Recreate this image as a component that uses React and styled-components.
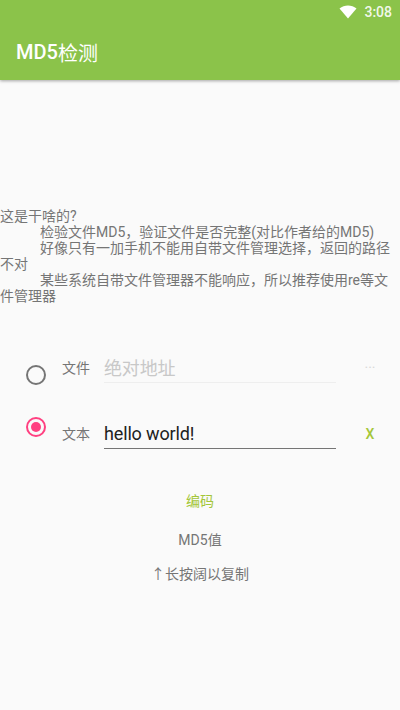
import React from "react";
import styled, { createGlobalStyle } from "styled-components";

const GlobalStyle = createGlobalStyle`
  html, body {
    margin: 0;
    padding: 0;
    background: #fafafa;
  }
  body {
    font-family: Roboto, "Noto Sans CJK SC", sans-serif;
  }
`;

const Page = styled.div`
  width: 400px;
  height: 710px;
  overflow: hidden;
  background: #fafafa;
  display: flex;
  flex-direction: column;
`;

const Header = styled.header`
  background: #8bc34a;
  height: 80px;
  box-shadow: 0 1px 3px rgba(0, 0, 0, 0.35);
  color: #fff;
`;

const StatusBar = styled.div`
  height: 24px;
  display: flex;
  align-items: center;
  justify-content: flex-end;
  gap: 7px;
  padding-right: 8px;
  font-size: 14px;
  font-weight: 500;
  color: rgba(255, 255, 255, 0.9);
`;

const Title = styled.h1`
  margin: 0;
  height: 56px;
  padding-left: 16px;
  display: flex;
  align-items: center;
  font-size: 20px;
  font-weight: 500;
`;

const TitleCjk = styled.span`
  font-weight: 400;
`;

const Intro = styled.section`
  margin-top: 128px;
  font-size: 14px;
  line-height: 16px;
  color: #757575;
`;

const IntroLine = styled.p`
  margin: 0;
  text-indent: ${(p) => (p.$indent ? "40px" : "0")};
`;

const Form = styled.div`
  margin-top: 42px;
  display: flex;
`;

const RadioColumn = styled.div`
  flex: none;
  margin: 19px 0 0 26px;
  width: 36px;
  display: flex;
  flex-direction: column;
  gap: 32px;
`;

const Radio = styled.span`
  box-sizing: border-box;
  width: 20px;
  height: 20px;
  border-radius: 50%;
  border: 2px solid ${(p) => (p.$checked ? "#ff4081" : "#757575")};
  display: flex;
  align-items: center;
  justify-content: center;
  &::after {
    content: "";
    display: ${(p) => (p.$checked ? "block" : "none")};
    width: 10px;
    height: 10px;
    border-radius: 50%;
    background: #ff4081;
  }
`;

const Fields = styled.div`
  flex: none;
  display: flex;
  flex-direction: column;
  gap: 22px;
`;

const Field = styled.div`
  display: flex;
  align-items: center;
  height: 44px;
`;

const FieldLabel = styled.span`
  width: 42px;
  margin-bottom: 2px;
  font-size: 14px;
  color: #757575;
`;

const FieldValue = styled.div`
  box-sizing: border-box;
  width: 232px;
  height: 30px;
  padding-bottom: ${(p) => (p.$active ? "0" : "2px")};
  display: flex;
  align-items: center;
  font-size: 18px;
  letter-spacing: -0.15px;
  border-bottom: 1px solid ${(p) => (p.$active ? "#757575" : "#eeeeee")};
  color: ${(p) => (p.$active ? "#212121" : "#c8c8c8")};
`;

const FieldAction = styled.span`
  width: 68px;
  text-align: center;
  font-size: 14px;
  font-weight: ${(p) => (p.$strong ? 500 : 400)};
  color: ${(p) => (p.$strong ? "#a4c639" : "#d8d8d8")};
`;

const Actions = styled.div`
  margin-top: 22px;
  display: flex;
  flex-direction: column;
  align-items: center;
  font-size: 14px;
  color: #757575;
`;

const EncodeButton = styled.div`
  height: 44px;
  display: flex;
  align-items: center;
  color: #a4c639;
`;

const ResultText = styled.div`
  height: 34px;
  display: flex;
  align-items: center;
`;

const WifiIcon = () => (
  <svg width="18" height="14" viewBox="0 0 18 14">
    <path d="M0.5 3.6 C5.3 -0.6 12.7 -0.6 17.5 3.6 L9 13.6 Z" fill="#fff" />
  </svg>
);

const App = () => {
  return (
    <Page>
      <GlobalStyle />
      <Header>
        <StatusBar>
          <WifiIcon />
          <span>3:08</span>
        </StatusBar>
        <Title>
          MD5<TitleCjk>检测</TitleCjk>
        </Title>
      </Header>
      <Intro>
        <IntroLine>这是干啥的?</IntroLine>
        <IntroLine $indent>检验文件MD5&#xFF0C;验证文件是否完整(对比作者给的MD5)</IntroLine>
        <IntroLine $indent>好像只有一加手机不能用自带文件管理选择&#xFF0C;返回的路径不对</IntroLine>
        <IntroLine $indent>某些系统自带文件管理器不能响应&#xFF0C;所以推荐使用re等文件管理器</IntroLine>
      </Intro>
      <Form>
        <RadioColumn>
          <Radio />
          <Radio $checked />
        </RadioColumn>
        <Fields>
          <Field>
            <FieldLabel>文件</FieldLabel>
            <FieldValue>绝对地址</FieldValue>
            <FieldAction>···</FieldAction>
          </Field>
          <Field>
            <FieldLabel>文本</FieldLabel>
            <FieldValue $active>hello world!</FieldValue>
            <FieldAction $strong>X</FieldAction>
          </Field>
        </Fields>
      </Form>
      <Actions>
        <EncodeButton>编码</EncodeButton>
        <ResultText>MD5值</ResultText>
        <ResultText>↑长按阔以复制</ResultText>
      </Actions>
    </Page>
  );
};

export default App;
